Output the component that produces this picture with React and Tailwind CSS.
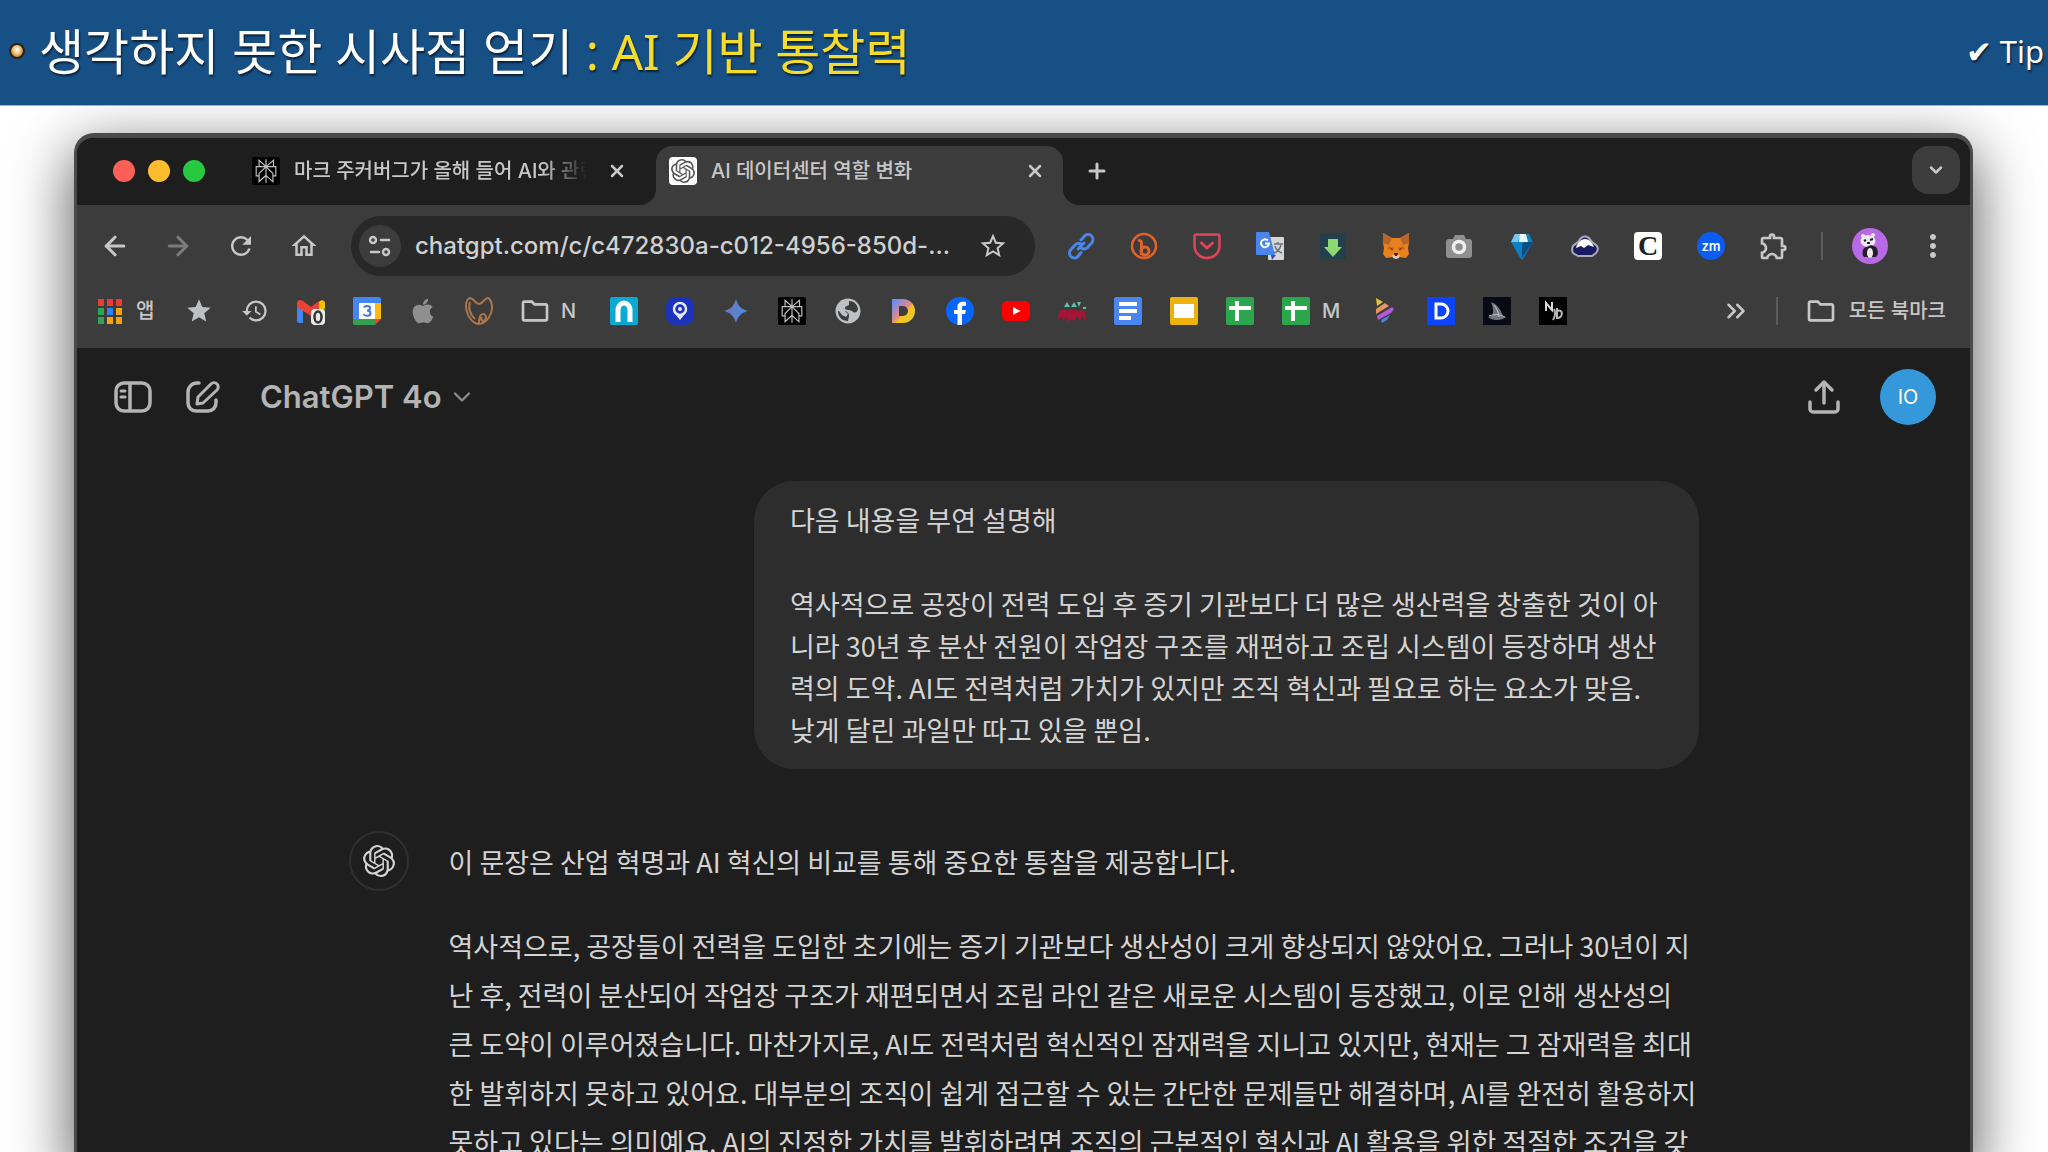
import { useState } from "react";
import {
  LuArrowLeft,
  LuArrowRight,
  LuPlus,
  LuX,
  LuChevronDown,
  LuChevronsRight,
} from "react-icons/lu";
import {
  MdRefresh,
  MdOutlineHome,
  MdHistory,
  MdStar,
  MdStarBorder,
  MdOutlineFolder,
  MdOutlineExtension,
  MdMoreVert,
} from "react-icons/md";
import { SiPerplexity, SiOpenai } from "react-icons/si";
import { FaApple } from "react-icons/fa";

const Svg = ({ children, box = 28, className = "size-7" }) => (
  <svg viewBox={`0 0 ${box} ${box}`} fill="none" className={className} aria-hidden="true">
    {children}
  </svg>
);

/* ---------- extension icons ---------- */

const LinkIcon = () => (
  <Svg>
    <g stroke="#4a86e8" strokeWidth="3" strokeLinecap="round" strokeLinejoin="round">
      <path d="M14 8l4-4.500a5 5 0 0 1 7 7l-4.500 5a5 5 0 0 1-6.500.500" />
      <path d="M14 20.500l-3.500 4.500a5 5 0 0 1-7-7l4.500-5a5 5 0 0 1 6.500-.500" />
      <path d="M11 17l6-6" />
    </g>
  </Svg>
);

const BitlyIcon = () => (
  <Svg>
    <circle cx="14" cy="14" r="12" stroke="#e2622a" strokeWidth="2.500" />
    <path d="M8 9c2-1 3.500 0 3.500 2v12" stroke="#e2622a" strokeWidth="3" />
    <circle cx="15" cy="19" r="4" stroke="#e2622a" strokeWidth="3" />
  </Svg>
);

const PocketIcon = () => (
  <Svg>
    <path
      d="M3 2.500h22a1.500 1.500 0 0 1 1.500 1.500v10a12.500 12 0 0 1-25 0V4A1.500 1.500 0 0 1 3 2.500z"
      stroke="#e0445a"
      strokeWidth="2.500"
    />
    <path d="M8.500 11l5.500 5 5.500-5" stroke="#e0445a" strokeWidth="3" strokeLinecap="round" strokeLinejoin="round" />
  </Svg>
);

const TranslateIcon = () => (
  <Svg>
    <rect x="12" y="5" width="16" height="23" rx="1" fill="#d6d6d6" />
    <path d="M18 12h9M22 10v2M25 13c-1 4-4 7-7 8M19 14c1 3 4 6 7 7" stroke="#68737c" strokeWidth="1.500" />
    <path d="M15 23h5l-4 5z" fill="#3a4bb0" />
    <path d="M1 0h12l6 23H1a1 1 0 0 1-1-1V1a1 1 0 0 1 1-1z" fill="#4a85ec" />
    <path d="M12 8.500a4 4 0 1 0 1 3H9" stroke="#fff" strokeWidth="2" />
  </Svg>
);

const DownloadIcon = () => (
  <Svg>
    <rect x="1" y="1" width="26" height="26" rx="2" fill="#233f4c" />
    <path d="M9 7h10v8h4l-9 10-9-10h4z" fill="#8cd873" />
  </Svg>
);

const FoxIcon = () => (
  <Svg>
    <path d="M1 1l9 5h8l9-5v10l-1 5 1 6-3 4-7-1-3 2-3-2-7 1-3-4 1-6-1-5z" fill="#e8821e" />
    <path d="M1 1l9 5-3 7-6-2zM27 1l-9 5 3 7 6-2z" fill="#b5652a" />
    <path d="M7 14l5 2-1 3-6-2zM21 14l-5 2 1 3 6-2z" fill="#d06a1b" />
    <path d="M10 23h8l-1 3-3 1-3-1z" fill="#d8c9bd" />
    <path d="M12 21h4l-1 3h-2zM8 16l3 1-1 1zM20 16l-3 1 1 1z" fill="#33251d" />
  </Svg>
);

const CameraIcon = () => (
  <Svg>
    <path d="M4 7h4l2-4h9l2 4h3a3 3 0 0 1 3 3v13a3 3 0 0 1-3 3H4a3 3 0 0 1-3-3V10a3 3 0 0 1 3-3z" fill="#8f8f8f" />
    <circle cx="14" cy="15" r="5.500" stroke="#efefef" strokeWidth="3.500" />
  </Svg>
);

const GemIcon = () => (
  <Svg>
    <path d="M7 2h14l4 8-8 14-3 4-3-4L3 10z" fill="#0d7fc2" />
    <path d="M7 2h7l-4 8H3z" fill="#74c8ee" />
    <path d="M12 2h6l2 8h-9z" fill="#e6f6fd" />
    <path d="M14 12l3-2h8L14 26z" fill="#0b4e86" />
  </Svg>
);

const CloudIcon = () => (
  <Svg>
    <path
      d="M8 9c3-6 9-6 12 0l6 5c1 2 1 5-1 7l-4 3H7l-5-3c-1-2-1-5 0-7z"
      fill="#1b1a63"
      stroke="#a9abb8"
      strokeWidth="2"
    />
    <path d="M5 16c1-5 5-9 9-9s7 3 9 8l-6-2-4 3-3-2z" fill="#fff" />
  </Svg>
);

const LetterCIcon = () => (
  <span className="flex size-7 items-center justify-center rounded-sm bg-white font-['Liberation_Serif',serif] text-[28px] leading-7 font-bold text-[#222]">
    C
  </span>
);

const ZoomIcon = () => (
  <span className="flex size-7 items-center justify-center rounded-full bg-[#0b5cf0] text-[13px] leading-7 font-semibold text-white">
    zm
  </span>
);

const PandaAvatar = () => (
  <Svg box={36} className="size-9">
    <circle cx="18" cy="18" r="18" fill="#b86ae6" />
    <circle cx="11" cy="8" r="2" fill="#eee9ee" />
    <circle cx="21" cy="7" r="2" fill="#eee9ee" />
    <ellipse cx="16" cy="13" rx="7.500" ry="6" fill="#eee9ee" />
    <path d="M12 20c-2 3-2 7 0 9h12c3-3 2-7 0-10l-5-2z" fill="#231d28" />
    <ellipse cx="18" cy="25" rx="3" ry="5" fill="#eee9ee" />
    <path d="M12 13l2-1M18 12l3-1M15 15h3" stroke="#26202c" strokeWidth="2" />
  </Svg>
);

/* ---------- bookmark icons ---------- */

const AppsIcon = () => {
  const colors = [
    "#ea3c33", "#ea3c33", "#ea3c33",
    "#2ea455", "#2f82f0", "#f2a60d",
    "#2ea455", "#f2a60d", "#f2a60d",
  ];
  return (
    <Svg>
      {colors.map((color, i) => (
        <rect key={i} x={2 + (i % 3) * 9} y={2 + Math.floor(i / 3) * 9} width="6" height="7" fill={color} />
      ))}
    </Svg>
  );
};

const GmailIcon = () => (
  <Svg>
    <path d="M0 6h6v20H2a2 2 0 0 1-2-2z" fill="#4285f4" />
    <path d="M22 6h6v18a2 2 0 0 1-2 2h-4z" fill="#34a853" />
    <path d="M22 5c2-3 6-2 6 1v5l-6 4z" fill="#fbbc04" />
    <path d="M0 6c0-3 3-4 6-2l8 6 8-6v8l-8 7-14-9z" fill="#ea4335" />
    <rect x="14" y="12" width="14" height="16" rx="4" fill="#ececec" />
    <ellipse cx="21" cy="20" rx="3.500" ry="5.500" stroke="#333" strokeWidth="2.500" />
  </Svg>
);

const CalendarIcon = () => (
  <Svg>
    <path d="M2 0h24a2 2 0 0 1 2 2v4H6v16H0V2a2 2 0 0 1 2-2z" fill="#4285f4" />
    <path d="M22 6h6v16h-6z" fill="#fbbc04" />
    <path d="M0 22h22v6H2a2 2 0 0 1-2-2z" fill="#34a04e" />
    <path d="M22 22h6l-6 6z" fill="#ea4335" />
    <path d="M6 6h16v16H6z" fill="#fff" />
    <path d="M11 10.500c1-2 6-2 6 .500 0 2-2 2.500-3 2.500 1 0 3.500.500 3.500 3 0 3-6 3-7 .500" stroke="#3c78e6" strokeWidth="2" />
  </Svg>
);

const BearIcon = () => (
  <Svg>
    <g stroke="#a9764b" strokeWidth="2">
      <path d="M5 1c3 0 6 6 9 6s6-6 9-6c4 2 5 10 3 15-2 6-7 11-12 11S4 22 2 15C0 9 1 2 5 1z" />
      <path d="M14 26c0-5 1-9 4-9s4 4 2 6-5 0-3-3" />
      <path d="M5 5c-2 5 0 13 5 17" />
    </g>
  </Svg>
);

const ArchIcon = () => (
  <Svg>
    <rect width="28" height="28" rx="2" fill="#0aa9d4" />
    <path d="M8 25V13a6 7 0 0 1 12 0v12" stroke="#fff" strokeWidth="5" />
  </Svg>
);

const PinIcon = () => (
  <Svg>
    <rect width="28" height="28" rx="9" fill="#1d31b9" />
    <circle cx="14" cy="12" r="6" stroke="#e6e9fa" strokeWidth="2.500" />
    <circle cx="14" cy="12" r="2" fill="#e6e9fa" />
    <path d="M10 18l4 5 4-5z" fill="#e6e9fa" />
  </Svg>
);

const SparkIcon = () => (
  <Svg>
    <defs>
      <linearGradient id="spark" x1="0" y1="0" x2="1" y2="0">
        <stop stopColor="#7b70bd" />
        <stop offset="1" stopColor="#3f92e0" />
      </linearGradient>
    </defs>
    <path d="M14 2c2 7 5 10 12 12-7 2-10 5-12 12-2-7-5-10-12-12 7-2 10-5 12-12z" fill="url(#spark)" />
  </Svg>
);

const PerplexityIcon = () => (
  <span className="flex size-7 items-center justify-center rounded-xs bg-black text-[#c2c2c2]">
    <SiPerplexity className="size-6 stroke-current" />
  </span>
);

const GlobeIcon = () => (
  <Svg>
    <circle cx="14" cy="14" r="12.500" fill="#bdc1c6" />
    <path d="M4 14h6c3 0 5 2 5 5l-1 5c-6 0-10-4-10-10z" fill="#3c3c3c" />
    <path d="M15 4c5 0 8 3 9 8-1 4-3 4-5 3-2-3-8-1-8-4 0-2 3-2 4-3z" fill="#3c3c3c" />
    <path d="M5 14l6 0 3 3-2 3-4-2z" fill="#bdc1c6" />
  </Svg>
);

const RainbowDIcon = () => (
  <Svg>
    <defs>
      <linearGradient id="rainbow" x1="0" y1="0" x2="1" y2="1">
        <stop offset="0.100" stopColor="#6c8cf5" />
        <stop offset="0.500" stopColor="#e48a80" />
        <stop offset="0.600" stopColor="#f3c321" />
        <stop offset="1" stopColor="#e5cf1c" />
      </linearGradient>
    </defs>
    <path d="M2 2h11a12 12 0 0 1 0 24H2zM9 9v10h4a5 5 0 0 0 0-10z" fill="url(#rainbow)" fillRule="evenodd" />
  </Svg>
);

const FacebookIcon = () => (
  <Svg>
    <circle cx="14" cy="14" r="14" fill="#0866ff" />
    <path d="M11.500 28V17H8v-4h3.500v-3c0-4 2.500-6 8.500-5v4c-3-.500-4 0-4 2v2h4l-1 4h-3v11z" fill="#fff" />
  </Svg>
);

const YoutubeIcon = () => (
  <Svg>
    <rect y="4" width="28" height="20" rx="5" fill="#f00" />
    <path d="M11 10l7.500 4-7.500 4z" fill="#fff" />
  </Svg>
);

const BerriesIcon = () => (
  <Svg>
    <path d="M6 10l3-5 3 5zM13 10l3-5 3 5zM19 5h4l-2 5zM25 10h3v2h-3z" fill="#62bda9" />
    <path
      d="M1 14l5-2 4 2 4-2 6 2 6-1 2 6-1 4-3-4-2 5-3-5-3 5-3-2-3 3-2-5-2 4-2-4-4 3z"
      fill="#a51336"
    />
  </Svg>
);

const DocsIcon = () => (
  <Svg>
    <rect width="28" height="28" rx="2" fill="#4a86f3" />
    <path d="M5 7h18M5 14h18M5 21h12" stroke="#fff" strokeWidth="4" />
  </Svg>
);

const SlidesIcon = () => (
  <Svg>
    <rect width="28" height="28" rx="2" fill="#eeb30b" />
    <path d="M4 7h20v14H4z" fill="#fff" />
  </Svg>
);

const SheetsIcon = () => (
  <Svg>
    <rect width="28" height="28" rx="2" fill="#2ba64c" />
    <path d="M3 11h22M11 4v20" stroke="#fff" strokeWidth="4" />
  </Svg>
);

const StripesIcon = () => (
  <Svg>
    <path d="M5 1l7 4-6 4z" fill="#e2c53f" />
    <path d="M5 12l9-6 4 3-13 8z" fill="#e9955f" />
    <path d="M6 19l15-9 2 2-3 4-13 7z" fill="#b45ad8" />
    <path d="M10 23l9-5-3 5-5 3z" fill="#4f86d8" />
  </Svg>
);

const BlueDIcon = () => (
  <Svg>
    <rect width="28" height="28" fill="#0c43ff" />
    <path d="M9 7h5a7 7 0 0 1 0 14H9z" stroke="#fff" strokeWidth="3" />
  </Svg>
);

const SailIcon = () => (
  <Svg>
    <rect width="28" height="28" fill="#090b14" />
    <path d="M8 5c6 2 11 9 12 15h3c-4 4-14 4-18 0l4-1c2-4 1-9-1-14z" fill="#70757c" />
    <path d="M6 19c6-2 10-2 16 1M11 8c3 4 5 8 5 12" stroke="#c3c6ca" strokeWidth="1" />
  </Svg>
);

const NpIcon = () => (
  <Svg>
    <rect width="28" height="28" fill="#000" />
    <path d="M7 14V6l6 7V5" stroke="#d9d9d9" strokeWidth="2" />
    <path d="M15 12c2 4 1 8-1 11M18 22V11M18 14c6-3 7 7 0 7" stroke="#b8b8b8" strokeWidth="2" />
  </Svg>
);

/* ---------- data ---------- */

const extensions = [
  { name: "Link", icon: <LinkIcon /> },
  { name: "Bitly", icon: <BitlyIcon /> },
  { name: "Pocket", icon: <PocketIcon /> },
  { name: "Translate", icon: <TranslateIcon /> },
  { name: "Download", icon: <DownloadIcon /> },
  { name: "MetaMask", icon: <FoxIcon /> },
  { name: "Screenshot", icon: <CameraIcon /> },
  { name: "Gem", icon: <GemIcon /> },
  { name: "Cloud", icon: <CloudIcon /> },
  { name: "C", icon: <LetterCIcon /> },
  { name: "Zoom", icon: <ZoomIcon /> },
  { name: "Extensions", icon: <MdOutlineExtension className="size-8 shrink-0" /> },
];

const bookmarks = [
  { name: "Apps", icon: <AppsIcon />, label: "앱" },
  { name: "Favorites", icon: <MdStar className="size-7 text-[#bdc1c6]" /> },
  { name: "History", icon: <MdHistory className="size-7" /> },
  { name: "Gmail", icon: <GmailIcon /> },
  { name: "Calendar", icon: <CalendarIcon /> },
  { name: "Apple", icon: <FaApple className="size-7 text-[#8f8f8f]" /> },
  { name: "Bear", icon: <BearIcon /> },
  { name: "Folder N", icon: <MdOutlineFolder className="size-8 shrink-0" />, label: "N" },
  { name: "Arch", icon: <ArchIcon /> },
  { name: "Pin", icon: <PinIcon /> },
  { name: "Gemini", icon: <SparkIcon /> },
  { name: "Perplexity", icon: <PerplexityIcon /> },
  { name: "Web", icon: <GlobeIcon /> },
  { name: "Designer", icon: <RainbowDIcon /> },
  { name: "Facebook", icon: <FacebookIcon /> },
  { name: "YouTube", icon: <YoutubeIcon /> },
  { name: "Berries", icon: <BerriesIcon /> },
  { name: "Docs", icon: <DocsIcon /> },
  { name: "Slides", icon: <SlidesIcon /> },
  { name: "Sheets", icon: <SheetsIcon /> },
  { name: "Sheets M", icon: <SheetsIcon />, label: "M" },
  { name: "Stripes", icon: <StripesIcon /> },
  { name: "D", icon: <BlueDIcon /> },
  { name: "Sail", icon: <SailIcon /> },
  { name: "Np", icon: <NpIcon /> },
];

const question = `다음 내용을 부연 설명해

역사적으로 공장이 전력 도입 후 증기 기관보다 더 많은 생산력을 창출한 것이 아
니라 30년 후 분산 전원이 작업장 구조를 재편하고 조립 시스템이 등장하며 생산
력의 도약. AI도 전력처럼 가치가 있지만 조직 혁신과 필요로 하는 요소가 맞음.
낮게 달린 과일만 따고 있을 뿐임.`;

const answer = `역사적으로, 공장들이 전력을 도입한 초기에는 증기 기관보다 생산성이 크게 향상되지 않았어요. 그러나 30년이 지
난 후, 전력이 분산되어 작업장 구조가 재편되면서 조립 라인 같은 새로운 시스템이 등장했고, 이로 인해 생산성의
큰 도약이 이루어졌습니다. 마찬가지로, AI도 전력처럼 혁신적인 잠재력을 지니고 있지만, 현재는 그 잠재력을 최대
한 발휘하지 못하고 있어요. 대부분의 조직이 쉽게 접근할 수 있는 간단한 문제들만 해결하며, AI를 완전히 활용하지
못하고 있다는 의미예요. AI의 진정한 가치를 발휘하려면 조직의 근본적인 혁신과 AI 활용을 위한 적절한 조건을 갖`;

/* ---------- sections ---------- */

const SlideHeader = () => (
  <header className="relative z-10 flex h-[106px] shrink-0 items-center justify-between border-b border-[#8fb4d3] bg-[#175085] pr-1 pb-1 pl-[9px] font-['Noto_Sans','Noto_Sans_CJK_KR',sans-serif] whitespace-nowrap text-white text-shadow-[1px_2px_2px_rgb(0_0_0/0.6)]">
    <div className="flex items-center gap-[14px]">
      <span className="size-4 rounded-full border-2 border-[#2b2114] bg-radial-[at_50%_40%] from-white via-[#e8b765] to-[#7a4a12]" />
      <h1 className="text-[49px] leading-[64px]">
        생각하지 못한 시사점 얻기 <span className="text-[#f5dc2a]">: AI 기반 통찰력</span>
      </h1>
    </div>
    <p className="text-[31px] leading-10">✔ Tip</p>
  </header>
);

const TabFlare = ({ className, d }) => (
  <svg viewBox="0 0 16 16" className={`absolute bottom-0 size-4 fill-[#3c3c3c] ${className}`} aria-hidden="true">
    <path d={d} />
  </svg>
);

const TabBar = () => (
  <div className="flex h-[67px] items-end bg-[#1e1e1e] pr-[10px] pl-[36px] text-[20px] leading-[30px] font-medium text-[#c7c7c7]">
    <div className="flex h-[67px] items-center gap-[13px] pb-[2px]">
      <button aria-label="Close window" className="size-[22px] rounded-full bg-[#ff5f57]" />
      <button aria-label="Minimize" className="size-[22px] rounded-full bg-[#febc2e]" />
      <button aria-label="Zoom window" className="size-[22px] rounded-full bg-[#28c840]" />
    </div>

    <div className="ml-[34px] flex h-[59px] w-[417px] items-center pr-[29px] pb-[10px] pl-[13px]">
      <PerplexityIcon />
      <span className="mr-[20px] ml-[14px] flex-1 overflow-hidden mask-r-from-85% mask-r-to-100% whitespace-nowrap">
        마크 주커버그가 올해 들어 AI와 관련
      </span>
      <button aria-label="Close tab">
        <LuX className="size-5" strokeWidth={3} />
      </button>
    </div>

    <div className="relative flex h-[59px] w-[407px] items-center rounded-t-[16px] bg-[#3c3c3c] pr-[18px] pb-[10px] pl-[13px]">
      <TabFlare className="-left-4" d="M16 0v16H0A16 16 0 0 0 16 0z" />
      <span className="flex size-7 items-center justify-center rounded-sm bg-white text-[#555]">
        <SiOpenai className="size-6" />
      </span>
      <span className="ml-[14px] flex-1 whitespace-nowrap">AI 데이터센터 역할 변화</span>
      <button aria-label="Close tab">
        <LuX className="size-5" strokeWidth={3} />
      </button>
      <TabFlare className="-right-4" d="M0 0v16h16A16 16 0 0 1 0 0z" />
    </div>

    <button aria-label="New tab" className="mb-[22px] ml-[22px]">
      <LuPlus className="size-6" strokeWidth={3} />
    </button>
    <button aria-label="Search tabs" className="mb-[11px] ml-auto flex size-12 items-center justify-center rounded-[16px] bg-[#3c3c3c]">
      <LuChevronDown className="size-5" strokeWidth={3} />
    </button>
  </div>
);

const SiteInfoIcon = () => (
  <Svg box={24} className="size-6">
    <g stroke="currentColor" strokeWidth="2.500" strokeLinecap="round">
      <circle cx="5" cy="6" r="3" />
      <path d="M13 6h8M3 18h8" />
      <circle cx="18" cy="18" r="3" />
    </g>
  </Svg>
);

const AddressRow = () => {
  const [url, setUrl] = useState("chatgpt.com/c/c472830a-c012-4956-850d-...");

  return (
    <div className="flex h-[82px] items-center pr-[19px] pl-[23px]">
      <div className="flex items-center gap-[33px]">
        <button aria-label="Back"><LuArrowLeft className="size-[30px]" strokeWidth={2.5} /></button>
        <button aria-label="Forward" className="text-[#7b7b7b]"><LuArrowRight className="size-[30px]" strokeWidth={2.5} /></button>
        <button aria-label="Reload"><MdRefresh className="size-[30px]" /></button>
        <button aria-label="Home"><MdOutlineHome className="size-[30px]" /></button>
      </div>

      <div className="mr-[32px] ml-[32px] flex h-[60px] min-w-0 flex-1 items-center rounded-full bg-[#282828] pr-[27px] pl-2">
        <button aria-label="Site information" className="flex size-[42px] shrink-0 items-center justify-center rounded-full bg-[#3c3c3c]">
          <SiteInfoIcon />
        </button>
        <input
          type="text"
          aria-label="Address"
          value={url}
          onChange={(e) => setUrl(e.target.value)}
          className="ml-[14px] min-w-0 flex-1 bg-transparent text-[24px] leading-8 font-medium text-[#d0d0d0] outline-none"
        />
        <button aria-label="Bookmark this tab"><MdStarBorder className="size-[30px]" /></button>
      </div>

      <div className="flex items-center gap-[35px]">
        {extensions.map((item) => (
          <button key={item.name} aria-label={item.name} className="flex size-7 items-center justify-center">
            {item.icon}
          </button>
        ))}
      </div>
      <span className="mr-[29px] ml-[33px] h-7 w-[2px] bg-[#5c5c5c]" />
      <button aria-label="Profile"><PandaAvatar /></button>
      <button aria-label="Menu" className="ml-[27px]"><MdMoreVert className="size-9" /></button>
    </div>
  );
};

const BookmarkRow = () => (
  <nav className="flex h-[61px] items-start pt-[8px] pr-[24px] pl-[19px] text-[20px] leading-7 font-medium">
    <div className="flex gap-7 pt-[2px]">
      {bookmarks.map((item) => (
        <a key={item.name} href="#" aria-label={item.name} className="flex h-7 items-center gap-3">
          <span className="flex size-7 items-center justify-center">{item.icon}</span>
          {item.label && <span className="min-w-[21px]">{item.label}</span>}
        </a>
      ))}
    </div>
    <div className="ml-auto flex h-8 items-center">
      <button aria-label="More bookmarks"><LuChevronsRight className="size-[30px]" /></button>
      <span className="mr-[27px] ml-[25px] h-7 w-[2px] bg-[#5c5c5c]" />
      <a href="#" className="flex items-center gap-[12px] whitespace-nowrap">
        <MdOutlineFolder className="size-8" />
        모든 북마크
      </a>
    </div>
  </nav>
);

const ChatHeader = () => (
  <div className="flex h-[98px] items-center pr-[34px] pl-[36px] text-[#b4b4b4]">
    <button aria-label="Toggle sidebar">
      <Svg box={40} className="size-10">
        <g stroke="currentColor" strokeWidth="3.500">
          <rect x="3" y="6" width="34" height="28" rx="8" />
          <path d="M17 6v28" />
          <path d="M8 14h4M8 20h4" strokeWidth="3" strokeLinecap="round" />
        </g>
      </Svg>
    </button>
    <button aria-label="New chat" className="ml-[30px]">
      <Svg box={40} className="size-10">
        <g stroke="currentColor" strokeWidth="3.500" strokeLinecap="round" strokeLinejoin="round">
          <path d="M16 6h-2a9 9 0 0 0-9 9v11a8 8 0 0 0 8 8h12a8 8 0 0 0 8-8v-3" />
          <path d="M15 20L28 7a4 4 0 0 1 6 6L20 26l-6 1z" strokeWidth="3" />
        </g>
      </Svg>
    </button>
    <button className="ml-[37px] flex items-center gap-[6px] text-[31px] leading-10 font-semibold">
      ChatGPT 4o
      <LuChevronDown className="size-7 text-[#8b8b8b]" />
    </button>
    <button aria-label="Share" className="ml-auto">
      <Svg box={40} className="size-10">
        <g stroke="currentColor" strokeWidth="3.500" strokeLinecap="round" strokeLinejoin="round">
          <path d="M20 26V5M12 13l8-8 8 8" />
          <path d="M6 25v7a3 3 0 0 0 3 3h22a3 3 0 0 0 3-3v-7" />
        </g>
      </Svg>
    </button>
    <button className="ml-[36px] size-14 rounded-full bg-[#3498db] text-[20px] leading-7 text-white">IO</button>
  </div>
);

const Conversation = () => (
  <main className="mx-auto w-full max-w-[1350px] pt-[35px] font-['Noto_Sans_CJK_KR',sans-serif] text-[27px] text-[#d4d4d4]">
    <div className="ml-auto w-fit rounded-[40px] bg-[#2d2d2d] py-[18px] pr-[41px] pl-9 leading-[42px] whitespace-pre">
      {question}
    </div>
    <div className="mt-[62px] flex gap-10">
      <span className="flex size-[60px] shrink-0 items-center justify-center rounded-full border-2 border-[#303030]">
        <SiOpenai className="size-8" />
      </span>
      <div className="pt-[6px] leading-[49px] whitespace-pre">
        <p>이 문장은 산업 혁명과 AI 혁신의 비교를 통해 중요한 통찰을 제공합니다.</p>
        <p className="mt-[35px]">{answer}</p>
      </div>
    </div>
  </main>
);

const App = () => {
  return (
    <div className="flex h-screen flex-col overflow-hidden bg-white font-[Inter,'Noto_Sans_CJK_KR',sans-serif]">
      <SlideHeader />
      <div className="mt-[27px] mr-[75px] ml-[74px] flex-1 rounded-t-[20px] border-x-3 border-t-5 border-[#4a4a4a] bg-[#1e1e1e] shadow-[0_18px_60px_2px_rgb(0_0_0/0.65)]">
        <div className="overflow-hidden rounded-t-[16px]">
          <TabBar />
          <div className="bg-[#3c3c3c] text-[#c7c7c7]">
            <AddressRow />
            <BookmarkRow />
          </div>
        </div>
        <ChatHeader />
        <Conversation />
      </div>
    </div>
  );
};

export default App;
